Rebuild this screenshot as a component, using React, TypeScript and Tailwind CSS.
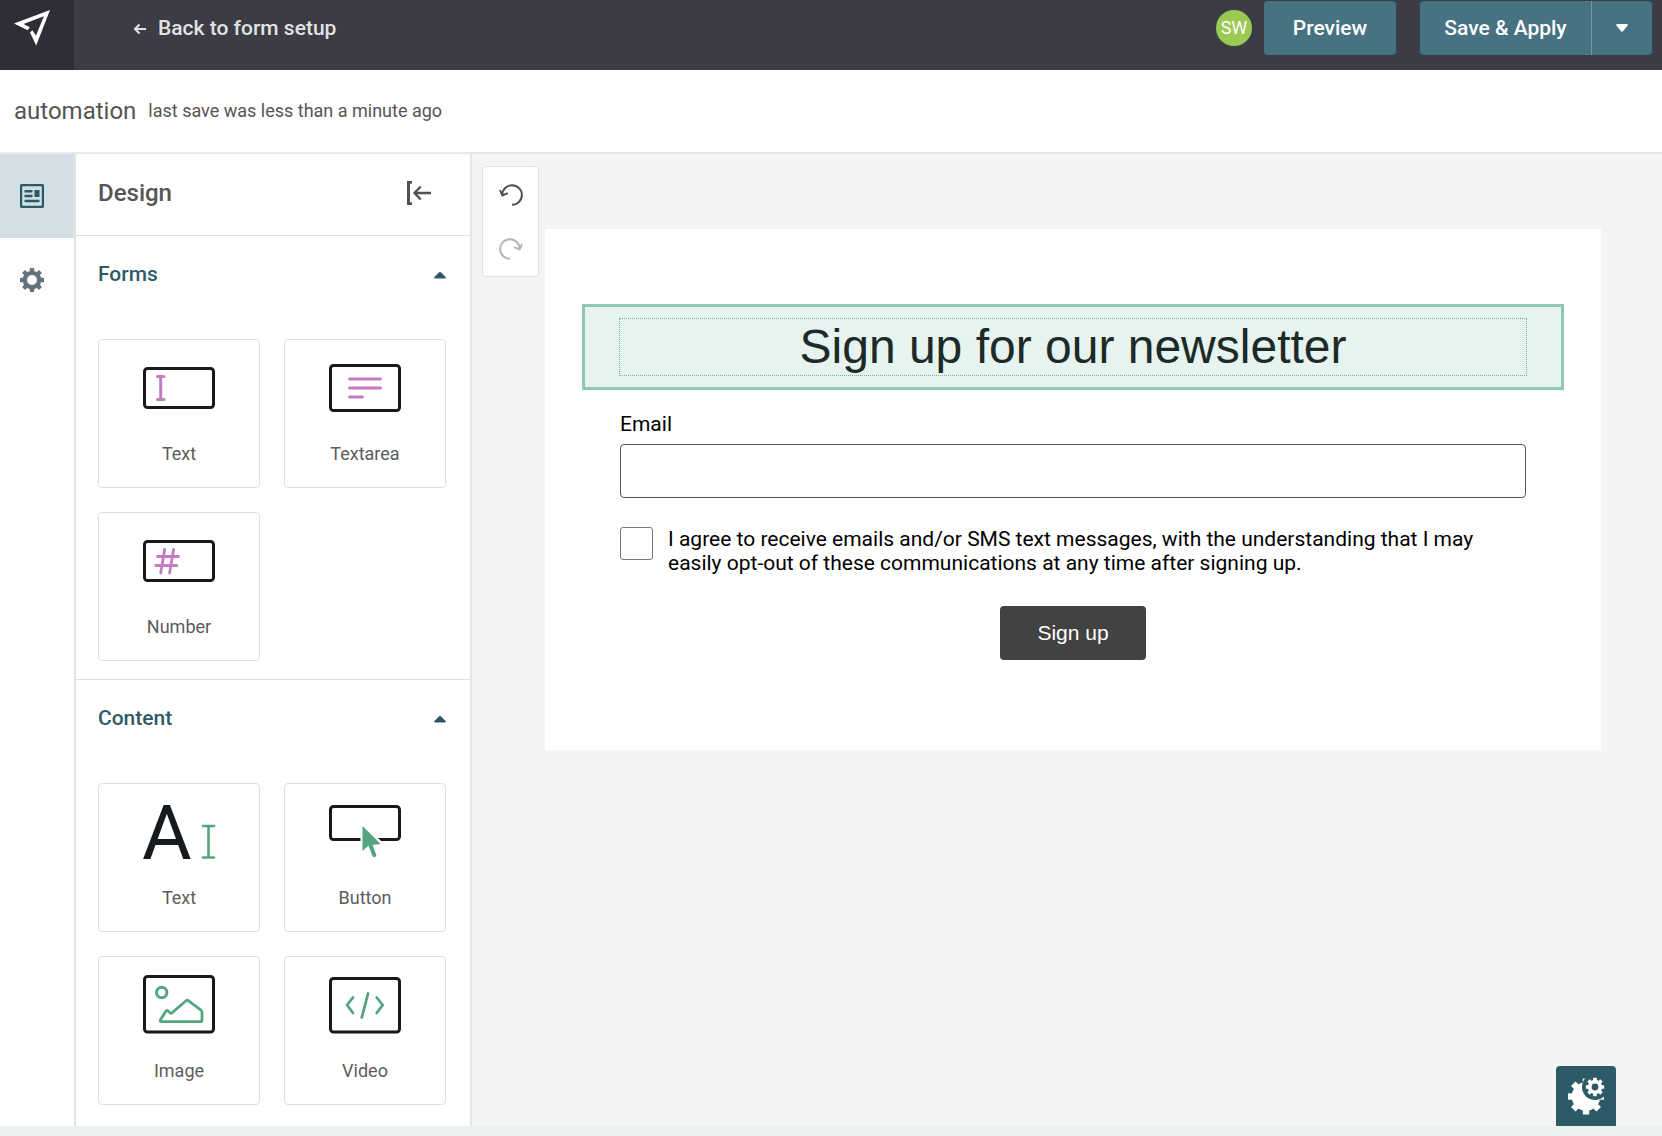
import type { ReactNode } from "react";

const INK = "#171a1c";
const PINK = "#c47bbf";
const GREEN = "#53a57e";

function Gear({ cx, cy, r, body, tooth, hole, fill, holeFill }: {
  cx: number; cy: number; r: number; body: number; tooth: number; hole: number; fill: string; holeFill?: string;
}) {
  return (
    <g>
      {[0, 45, 90, 135].map((a) => (
        <rect key={a} x={cx - tooth / 2} y={cy - r} width={tooth} height={r * 2} rx="0.4" fill={fill} transform={`rotate(${a} ${cx} ${cy})`} />
      ))}
      <circle cx={cx} cy={cy} r={body} fill={fill} />
      {holeFill && <circle cx={cx} cy={cy} r={hole} fill={holeFill} />}
    </g>
  );
}

function Frame({ y, h }: { y: number; h: number }) {
  return <rect x="1.5" y={y + 1.5} width="69" height={h - 3} rx="3" stroke={INK} strokeWidth="3" />;
}

function Art({ children }: { children: ReactNode }) {
  return (
    <svg width="72" height="60" viewBox="0 0 72 60" fill="none" strokeLinecap="round" strokeLinejoin="round" className="overflow-visible" aria-hidden="true">
      {children}
    </svg>
  );
}

const formTiles = [
  {
    label: "Text",
    art: (
      <Art>
        <Frame y={9} h={42} />
        <path d="M14.5 18.5h6.5M14.5 41.5h6.5M17.7 18.5v23" stroke={PINK} strokeWidth="3" />
      </Art>
    ),
  },
  {
    label: "Textarea",
    art: (
      <Art>
        <Frame y={6} h={48} />
        <path d="M20.5 21h31M20.5 30h31M20.5 39h13" stroke={PINK} strokeWidth="2.8" />
      </Art>
    ),
  },
  {
    label: "Number",
    art: (
      <Art>
        <Frame y={9} h={42} />
        <path d="M14.5 25.5h21M12.8 34.5h21M21.7 18.5l-4 23.5M30.6 18.5l-4 23.5" stroke={PINK} strokeWidth="2.8" />
      </Art>
    ),
  },
];

const contentTiles = [
  {
    label: "Text",
    art: (
      <Art>
        <text x="-1" y="57" fontFamily="Roboto, sans-serif" fontSize="76" fill={INK}>A</text>
        <path d="M60 24h11M60 55.500h11M65.500 24v31" stroke={GREEN} strokeWidth="2.6" />
      </Art>
    ),
  },
  {
    label: "Button",
    art: (
      <Art>
        <Frame y={3} h={36} />
        <path d="M33.500 24v25l5-4.500 5.400 10.400 3.600-1.600-4.200-10.500 8.400-1.300z" fill={GREEN} stroke="#fff" strokeWidth="4" strokeLinejoin="miter" />
        <path d="M33.500 24v25l6-5.500 12.200-1.500z" fill={GREEN} />
        <path d="M41 42l4.300 11.200" stroke={GREEN} strokeWidth="4" />
      </Art>
    ),
  },
  {
    label: "Image",
    art: (
      <Art>
        <Frame y={0} h={58.6} />
        <circle cx="18.7" cy="17.5" r="5.2" stroke={GREEN} strokeWidth="3" />
        <path d="M17.600 44.600l5.200-8.400q1-1.300 2.400-.1l1.400 1.500q1.200 1.200 2.500.1L43 25.800q1.300-1 2.600 0L57.800 35q1.200 1 1.200 2.300v7.700q0 1.700-1.700 1.700H18.600q-2.100-.2-1-2.100z" stroke={GREEN} strokeWidth="2.8" />
      </Art>
    ),
  },
  {
    label: "Video",
    art: (
      <Art>
        <Frame y={2} h={56.6} />
        <path d="M24 22.500L18 30l6 8M39 18.500L32.800 42.500M47.700 22.500l6 7.500-6 8" stroke={GREEN} strokeWidth="2.8" />
      </Art>
    ),
  },
];

function Section({ title, tiles }: { title: string; tiles: { label: string; art: ReactNode }[] }) {
  return (
    <section className="border-b border-[#dfdfdf] pb-[18px] last:border-b-0">
      <h3>
        <button type="button" aria-expanded="true" className="flex h-[78px] w-full items-center justify-between px-6 text-[21px] font-medium text-[#2e5a68]">
          {title}
          <svg width="12" height="8" viewBox="0 0 12 8" aria-hidden="true">
            <path d="M6 .5L11.600 6q.6 1.500-.8 1.500H1.200Q-.2 7.500.4 6z" fill="#2b5866" />
          </svg>
        </button>
      </h3>
      <div className="grid grid-cols-2 gap-6 px-6 pt-[25px]">
        {tiles.map((t) => (
          <button key={t.label} type="button" className="flex h-[149px] flex-col items-center gap-6 rounded border border-[#e0e0e0] pt-[18px] text-[18px] leading-6 text-[#5c5c5c]">
            {t.art}
            {t.label}
          </button>
        ))}
      </div>
    </section>
  );
}

function UndoIcon({ color, flip }: { color: string; flip?: boolean }) {
  return (
    <svg width="24" height="24" viewBox="0 0 24 24" fill="none" stroke={color} strokeWidth="2" className={flip ? "-scale-x-100" : ""} aria-hidden="true">
      <path d="M3.300 12A9.800 9.800 0 1 1 13 21.800" />
      <path d="M1 7.200l2.400 5.200 5.400-2.300" />
    </svg>
  );
}

export default function App() {
  return (
    <div className="flex min-h-screen flex-col bg-[#eef1f2] font-[Roboto,sans-serif] text-[#555]">
      <header className="flex h-[70px] bg-[#3c3c45]">
        <a href="#" aria-label="Home" className="w-[74px] bg-[#2e2e37]">
          <svg width="74" height="56" viewBox="0 0 74 56" aria-hidden="true">
            <path fillRule="evenodd" fill="#fff" d="M14 23.600L50 10 36.200 45.600 30 32.500 32.300 30.300 36 35.600 43.900 16.200 23.500 23.900 29.900 27.200 27.600 30.200z" />
          </svg>
        </a>
        <div className="flex h-14 flex-1 items-center pr-2.5 pl-[60px]">
          <a href="#" className="flex items-center gap-3 pt-0.5 text-[21px] font-medium text-[#e2e2e4]">
            <svg width="12" height="12" viewBox="0 0 12 12" fill="none" stroke="currentColor" strokeWidth="2" aria-hidden="true">
              <path d="M12 6H1.200M5.500 1.500L1 6l4.500 4.500" />
            </svg>
            Back to form setup
          </a>
          <span className="ml-auto flex size-9 items-center justify-center rounded-full bg-[#9cc954] pb-0.5 text-[18px] text-white">SW</span>
          <button type="button" className="ml-3 h-[54px] w-[132px] rounded bg-[#467282] pt-0.5 text-[21px] font-medium text-white">Preview</button>
          <button type="button" className="ml-6 h-[54px] w-[171px] rounded-l bg-[#467282] pt-0.5 text-[21px] font-medium text-white">Save &amp; Apply</button>
          <button type="button" aria-label="More save options" className="flex h-[54px] w-[61px] items-center justify-center rounded-r border-l border-[#7597a3] bg-[#467282]">
            <svg width="12" height="8" viewBox="0 0 12 8" aria-hidden="true">
              <path d="M1.200 0h9.600Q12.200 0 11.600 1.500L7 7.200q-1 .9-2 0L.4 1.500Q-.2 0 1.200 0z" fill="#fff" />
            </svg>
          </button>
        </div>
      </header>

      <div className="flex h-[84px] items-center gap-3 border-b-2 border-[#e8e8e8] bg-white px-3.5">
        <h1 className="text-[24px]">automation</h1>
        <p className="pb-0.5 text-[18px]">last save was less than a minute ago</p>
      </div>

      <div className="relative mb-2.5 flex flex-1 bg-[#f4f4f4]">
        <nav className="w-[74px] bg-white">
          <button type="button" aria-label="Design" className="flex h-[84px] w-full items-center bg-[#d2dfe5] pl-5">
            <svg width="24" height="24" viewBox="0 0 24 24" fill="none" stroke="#2b5866" strokeWidth="2" aria-hidden="true">
              <rect x="1" y="1" width="22" height="22" rx="1.500" strokeWidth="2.400" />
              <path d="M4.500 7.300h8M4.500 12h8M4.500 17h15" strokeWidth="2.400" />
              <path d="M17 6v7" strokeWidth="5" />
            </svg>
          </button>
          <button type="button" aria-label="Settings" className="flex h-[84px] w-full items-center pl-5">
            <svg width="24" height="24" viewBox="0 0 24 24" aria-hidden="true">
              <Gear cx={12} cy={12} r={12} body={9.3} tooth={4.4} hole={5} fill="#62747c" holeFill="#fff" />
            </svg>
          </button>
        </nav>

        <aside className="w-[398px] border-r-2 border-[#e6e6e6] bg-white shadow-[inset_2px_0_0_#e2e2e2]">
          <div className="flex h-[82px] items-center justify-between border-b border-[#dfdfdf] pr-[39px] pl-6 pb-1">
            <h2 className="text-[24px] font-medium">Design</h2>
            <button type="button" aria-label="Collapse panel">
              <svg width="25" height="24" viewBox="0 0 25 24" fill="none" stroke="#4b5357" strokeWidth="2.300" aria-hidden="true">
                <path d="M6 1.300H2.500V22.700H6" strokeWidth="3" />
                <path d="M25 12H9M14.700 5.500L8.500 12l6.200 6.500" />
              </svg>
            </button>
          </div>
          <Section title="Forms" tiles={formTiles} />
          <Section title="Content" tiles={contentTiles} />
        </aside>

        <main className="flex flex-1 items-start gap-1.5 pr-[61px] pl-2.5">
          <div className="mt-3 flex w-[57px] shrink-0 flex-col rounded border border-[#e2e2e2] bg-white">
            <button type="button" aria-label="Undo" className="flex h-[55px] items-center justify-center">
              <UndoIcon color="#4c5052" />
            </button>
            <button type="button" aria-label="Redo" className="flex h-[54px] items-center justify-center">
              <UndoIcon color="#b4b7b8" flip />
            </button>
          </div>

          <form className="mt-[75px] flex-1 bg-white px-[37px] pt-[75px] pb-[90px] text-[21px] text-black" onSubmit={(e) => e.preventDefault()}>
            <div className="border-[3px] border-[#91c8b5] bg-[#e6f3ef] px-[34px] py-[11px]">
              <h2 className="border border-dotted border-[#6fb49c] text-center font-['Liberation_Sans',Arial,sans-serif] text-[48px] leading-[56px] text-[#1d2a27]">
                Sign up for our newsletter
              </h2>
            </div>
            <div className="px-[38px]">
              <label htmlFor="email" className="mt-[22px] block leading-6">Email</label>
              <input id="email" type="email" className="mt-2 block h-[54px] w-full rounded border border-[#555] bg-white px-3" />
              <div className="mt-[29px] flex gap-[15px]">
                <input id="agree" type="checkbox" className="size-[33px] shrink-0 appearance-none rounded-[3px] border border-[#777] bg-white" />
                <label htmlFor="agree" className="leading-6">
                  I agree to receive emails and/or SMS text messages, with the understanding that I may easily opt-out of these communications at any time after signing up.
                </label>
              </div>
              <button type="submit" className="mx-auto mt-[31px] block h-[54px] w-[146px] rounded bg-[#424242] font-['Liberation_Sans',Arial,sans-serif] text-white">
                Sign up
              </button>
            </div>
          </form>
        </main>

        <button type="button" aria-label="Preferences" className="absolute right-[46px] bottom-0 size-[60px] rounded-t bg-[#2d5a67]">
          <svg width="60" height="60" viewBox="0 0 60 60" aria-hidden="true">
            <Gear cx={30} cy={30.5} r={18} body={14.3} tooth={6.5} hole={0} fill="#fff" />
            <circle cx="39" cy="21" r="13" fill="#2d5a67" />
            <Gear cx={39} cy={21} r={9.2} body={7.2} tooth={3.6} hole={3.4} fill="#fff" holeFill="#2d5a67" />
          </svg>
        </button>
      </div>
    </div>
  );
}
